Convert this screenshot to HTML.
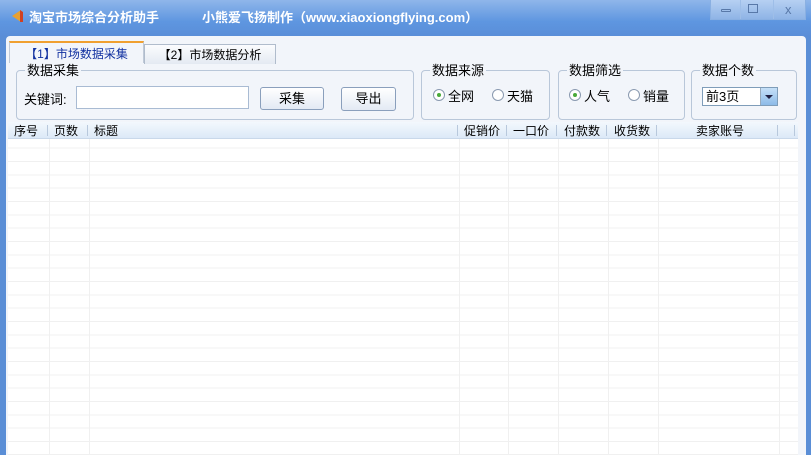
<!DOCTYPE html>
<html><head><meta charset="utf-8"><style>
*{margin:0;padding:0;box-sizing:border-box}
body{width:811px;height:455px;overflow:hidden;background:#5a8ed6;font-family:"Liberation Sans","Noto Sans CJK SC",sans-serif;font-size:12px;color:#000;position:relative}
.title{position:absolute;left:0;top:0;width:811px;height:36px;background:linear-gradient(#8fb6ea,#5e96e0 60%,#5a8ed8);}
.t1{position:absolute;left:29px;top:7px;color:#fff;font-weight:bold;font-size:13px}
.t2{position:absolute;left:202px;top:7px;color:#fff;font-weight:bold;font-size:13px}
.btns{position:absolute;left:710px;top:0;width:96px;height:20px;border:1px solid #8ab0e2;border-top:none;background:linear-gradient(#b6d0f2,#8fb4e6)}
.btns div{position:absolute;top:0;height:19px;width:1px;background:#9ebee8}
.body{position:absolute;left:6px;top:36px;width:800px;height:419px;background:#f2f5fa;border-radius:4px 4px 0 0}
.tab{position:absolute;height:22px;font-size:12px;padding-top:2px;text-align:center}
fieldset{position:absolute;border:1px solid #b9c7d9;border-radius:4px;padding:0}
legend{margin-left:8px;padding:0 2px;font-size:13px;line-height:13px}
.lbl{position:absolute;font-size:13px}
.btn{position:absolute;border:1px solid #8a9fbc;border-radius:3px;background:linear-gradient(#fff,#e3eaf4);text-align:center;font-size:13px;line-height:21px}
.radio{position:absolute;width:12px;height:12px;border:1px solid #8a9ab0;border-radius:50%;background:#fff}
.radio.on::after{content:"";position:absolute;left:3px;top:3px;width:4px;height:4px;border-radius:50%;background:#4aaa3a}
.grid{position:absolute;left:2px;top:86px;width:790px;height:333px;background:#fff;
background-image:repeating-linear-gradient(to bottom,transparent 0,transparent 12.33px,#f0f0f0 12.33px,#f0f0f0 13.33px)}
.hdr{position:absolute;left:2px;top:86px;width:790px;height:17px;background:linear-gradient(#f3f8fd,#dce9f7);border-bottom:1px solid #c9d8ea;font-size:12px}
.hdr span{position:absolute;top:0px}
.col{position:absolute;top:103px;width:1px;height:316px;background:#f0f0f0}
.hs{position:absolute;top:3px;width:1px;height:11px;background:#b8c8dc}
</style></head><body>
<div class="title">
<svg style="position:absolute;left:9px;top:8px" width="16" height="16"><path d="M3 8 L12 2 L12 14 Z" fill="#e8a030"/><path d="M11 2 L14 4 L14 14 L11 14Z" fill="#d04020"/></svg>
<div class="t1">淘宝市场综合分析助手</div>
<div class="t2">小熊爱飞扬制作（www.xiaoxiongflying.com）</div>
<div class="btns"><div style="left:29px"></div><div style="left:62px"></div>
<span style="position:absolute;left:10px;top:9px;width:10px;height:3px;border:1px solid #5878a8;border-radius:1px"></span>
<span style="position:absolute;left:37px;top:4px;width:10px;height:9px;border:1px solid #5878a8"></span>
<span style="position:absolute;left:74px;top:2px;color:#5878a8;font-size:13px">x</span></div>
</div>
<div class="body">
<div class="tab" style="left:3px;top:5px;width:135px;background:#f2f5fa;border-top:2px solid #f0a030;color:#1030a0;border-left:1px solid #c0cad8;border-right:1px solid #c0cad8">【1】市场数据采集</div>
<div class="tab" style="left:138px;top:8px;width:132px;height:20px;padding-top:1px;background:linear-gradient(#fbfcfe,#e4eaf2);border:1px solid #b0bccc;border-bottom:none">【2】市场数据分析</div>
<fieldset style="left:10px;top:28px;width:398px;height:56px"><legend>数据采集</legend></fieldset>
<div class="lbl" style="left:18px;top:53px">关键词:</div>
<div style="position:absolute;left:70px;top:50px;width:173px;height:23px;border:1px solid #a9bbd3;background:#fff"></div>
<div class="btn" style="left:254px;top:51px;width:64px;height:23px">采集</div>
<div class="btn" style="left:335px;top:51px;width:55px;height:24px">导出</div>
<fieldset style="left:415px;top:28px;width:129px;height:56px"><legend>数据来源</legend></fieldset>
<div class="radio on" style="left:427px;top:53px"></div><div class="lbl" style="left:442px;top:50px">全网</div>
<div class="radio" style="left:486px;top:53px"></div><div class="lbl" style="left:501px;top:50px">天猫</div>
<fieldset style="left:552px;top:28px;width:127px;height:56px"><legend>数据筛选</legend></fieldset>
<div class="radio on" style="left:563px;top:53px"></div><div class="lbl" style="left:578px;top:50px">人气</div>
<div class="radio" style="left:622px;top:53px"></div><div class="lbl" style="left:637px;top:50px">销量</div>
<fieldset style="left:685px;top:28px;width:106px;height:56px"><legend>数据个数</legend></fieldset>
<div style="position:absolute;left:696px;top:51px;width:76px;height:19px;border:1px solid #7f9db9;background:#fff;font-size:13px;padding-left:3px;line-height:18px">前3页
<div style="position:absolute;right:0;top:0;width:17px;height:17px;background:linear-gradient(#c6e0f8,#8dbbe8);border-left:1px solid #9ab"><div style="position:absolute;left:4px;top:7px;border:4px solid transparent;border-top:4px solid #224;border-bottom:none"></div></div></div>
<div class="grid"></div>
<div class="hdr">
<span style="left:6px">序号</span><div class="hs" style="left:39px"></div>
<span style="left:46px">页数</span><div class="hs" style="left:79px"></div>
<span style="left:86px">标题</span><div class="hs" style="left:449px"></div>
<span style="left:456px">促销价</span><div class="hs" style="left:498px"></div>
<span style="left:505px">一口价</span><div class="hs" style="left:548px"></div>
<span style="left:556px">付款数</span><div class="hs" style="left:598px"></div>
<span style="left:606px">收货数</span><div class="hs" style="left:648px"></div>
<span style="left:688px">卖家账号</span><div class="hs" style="left:769px"></div><div class="hs" style="left:786px"></div>
</div>
<div class="col" style="left:43px"></div><div class="col" style="left:83px"></div><div class="col" style="left:453px"></div><div class="col" style="left:502px"></div><div class="col" style="left:552px"></div><div class="col" style="left:602px"></div><div class="col" style="left:652px"></div><div class="col" style="left:773px"></div>
</div>
</body></html>
